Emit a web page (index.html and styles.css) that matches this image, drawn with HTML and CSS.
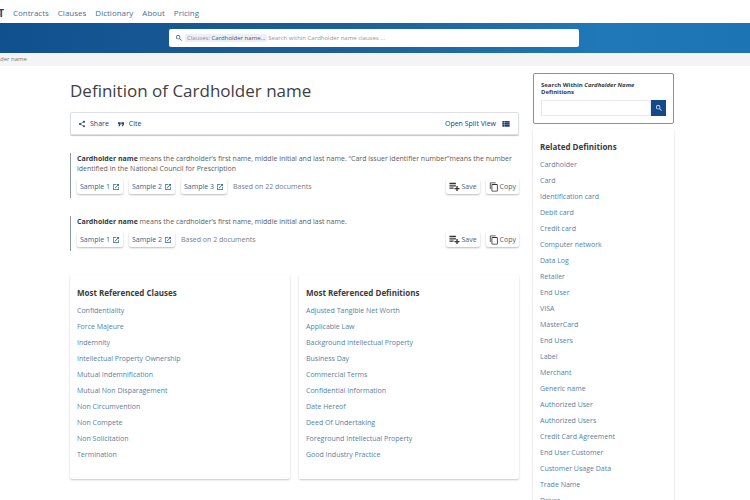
FILE: index.html
```html
<!DOCTYPE html>
<html lang="en">
<head>
    <meta charset="UTF-8">
    <meta name="viewport" content="width=device-width, initial-scale=1.0">
    <title>Definition of Cardholder name</title>
    <link rel="stylesheet" href="styles.css">
</head>
<body>
    <!-- Shared icons -->
    <svg class="sprite" aria-hidden="true">
        <symbol id="icon-search" viewBox="0 0 24 24"><path d="M15.5 14h-.79l-.28-.27A6.47 6.47 0 0 0 16 9.5 6.5 6.5 0 1 0 9.5 16c1.61 0 3.09-.59 4.23-1.57l.27.28v.79l5 4.99L20.49 19l-4.99-5zm-6 0a4.5 4.5 0 1 1 0-9 4.5 4.5 0 0 1 0 9z"/></symbol>
        <symbol id="icon-open" viewBox="0 0 24 24"><path d="M19 19H5V5h7V3H5a2 2 0 0 0-2 2v14a2 2 0 0 0 2 2h14a2 2 0 0 0 2-2v-7h-2v7zM14 3v2h3.59l-9.83 9.83 1.41 1.41L19 6.41V10h2V3h-7z"/></symbol>
        <symbol id="icon-save" viewBox="0 0 24 24"><path d="M1 4h14v3H1zM1 9h14v3H1zM1 14h9v3H1zM16 11h3v4h4v3h-4v4h-3v-4h-4v-3h4z"/></symbol>
        <symbol id="icon-copy" viewBox="0 0 24 24"><path d="M16 1H4a2 2 0 0 0-2 2v14h2V3h12V1zm3 4H8a2 2 0 0 0-2 2v14c0 1.1.9 2 2 2h11a2 2 0 0 0 2-2V7a2 2 0 0 0-2-2zm0 16H8V7h11v14z"/></symbol>
        <symbol id="icon-share" viewBox="0 0 24 24"><path d="M18 16.08c-.76 0-1.44.3-1.96.77L8.91 12.7c.05-.23.09-.46.09-.7s-.04-.47-.09-.7l7.05-4.11A3 3 0 1 0 15 5c0 .24.04.47.09.7L8.04 9.81a3 3 0 1 0 0 4.38l7.12 4.16c-.05.21-.08.43-.08.65A2.92 2.92 0 1 0 18 16.08z"/></symbol>
        <symbol id="icon-quote" viewBox="0 0 24 24"><path d="M3 7h8v6l-3 6H4l3-6H3zM13 7h8v6l-3 6h-4l3-6h-4z"/></symbol>
        <symbol id="icon-list" viewBox="0 0 24 24"><path d="M1 3h5v5H1zM1 9h5v5H1zM1 15h5v5H1zM7 3h16v5H7zM7 9h16v5H7zM7 15h16v5H7z"/></symbol>
    </svg>

    <nav class="navbar">
        <div class="logo"><span>T</span></div>
        <a href="#">Contracts</a>
        <a href="#">Clauses</a>
        <a href="#">Dictionary</a>
        <a href="#">About</a>
        <a href="#">Pricing</a>
    </nav>

    <!-- Main search -->
    <header class="search-banner">
        <form class="search-bar">
            <svg class="icon"><use href="#icon-search"/></svg>
            <span class="tag">Clauses: <b>Cardholder name...</b></span>
            <input type="text" aria-label="Search clauses" placeholder="Search within Cardholder name clauses ...">
        </form>
    </header>

    <div class="breadcrumb">der name</div>

    <div class="page">
        <main>
            <h1>Definition of Cardholder name</h1>

            <div class="toolbar">
                <button type="button"><svg class="icon"><use href="#icon-share"/></svg>Share</button>
                <button type="button"><svg class="icon"><use href="#icon-quote"/></svg>Cite</button>
                <button type="button" class="split-view">Open Split View<svg class="icon"><use href="#icon-list"/></svg></button>
            </div>

            <!-- Definitions -->
            <section class="definition">
                <p><strong>Cardholder name</strong> means the cardholder’s first name, middle initial and last name. “Card issuer identifier number”means the number identified in the National Council for Prescription</p>
                <div class="actions">
                    <a href="#">Sample 1<svg class="icon"><use href="#icon-open"/></svg></a>
                    <a href="#">Sample 2<svg class="icon"><use href="#icon-open"/></svg></a>
                    <a href="#">Sample 3<svg class="icon"><use href="#icon-open"/></svg></a>
                    <span class="based">Based on 22 documents</span>
                    <button type="button" class="save"><svg class="icon"><use href="#icon-save"/></svg>Save</button>
                    <button type="button"><svg class="icon"><use href="#icon-copy"/></svg>Copy</button>
                </div>
            </section>

            <section class="definition">
                <p><strong>Cardholder name</strong> means the cardholder’s first name, middle initial and last name.</p>
                <div class="actions">
                    <a href="#">Sample 1<svg class="icon"><use href="#icon-open"/></svg></a>
                    <a href="#">Sample 2<svg class="icon"><use href="#icon-open"/></svg></a>
                    <span class="based">Based on 2 documents</span>
                    <button type="button" class="save"><svg class="icon"><use href="#icon-save"/></svg>Save</button>
                    <button type="button"><svg class="icon"><use href="#icon-copy"/></svg>Copy</button>
                </div>
            </section>

            <div class="referenced">
                <section class="card">
                    <h2>Most Referenced Clauses</h2>
                    <ul>
                        <li><a href="#">Confidentiality</a></li>
                        <li><a href="#">Force Majeure</a></li>
                        <li><a href="#">Indemnity</a></li>
                        <li><a href="#">Intellectual Property Ownership</a></li>
                        <li><a href="#">Mutual Indemnification</a></li>
                        <li><a href="#">Mutual Non Disparagement</a></li>
                        <li><a href="#">Non Circumvention</a></li>
                        <li><a href="#">Non Compete</a></li>
                        <li><a href="#">Non Solicitation</a></li>
                        <li><a href="#">Termination</a></li>
                    </ul>
                </section>
                <section class="card">
                    <h2>Most Referenced Definitions</h2>
                    <ul>
                        <li><a href="#">Adjusted Tangible Net Worth</a></li>
                        <li><a href="#">Applicable Law</a></li>
                        <li><a href="#">Background Intellectual Property</a></li>
                        <li><a href="#">Business Day</a></li>
                        <li><a href="#">Commercial Terms</a></li>
                        <li><a href="#">Confidential Information</a></li>
                        <li><a href="#">Date Hereof</a></li>
                        <li><a href="#">Deed Of Undertaking</a></li>
                        <li><a href="#">Foreground Intellectual Property</a></li>
                        <li><a href="#">Good Industry Practice</a></li>
                    </ul>
                </section>
            </div>
        </main>

        <!-- Sidebar -->
        <aside>
            <form class="search-within">
                <label for="within">Search Within <em>Cardholder Name</em> Definitions</label>
                <div class="field">
                    <input type="text" id="within">
                    <button type="button" aria-label="Search"><svg class="icon"><use href="#icon-search"/></svg></button>
                </div>
            </form>
            <section class="card">
                <h2>Related Definitions</h2>
                <ul>
                    <li><a href="#">Cardholder</a></li>
                    <li><a href="#">Card</a></li>
                    <li><a href="#">Identification card</a></li>
                    <li><a href="#">Debit card</a></li>
                    <li><a href="#">Credit card</a></li>
                    <li><a href="#">Computer network</a></li>
                    <li><a href="#">Data Log</a></li>
                    <li><a href="#">Retailer</a></li>
                    <li><a href="#">End User</a></li>
                    <li><a href="#">VISA</a></li>
                    <li><a href="#">MasterCard</a></li>
                    <li><a href="#">End Users</a></li>
                    <li><a href="#">Label</a></li>
                    <li><a href="#">Merchant</a></li>
                    <li><a href="#">Generic name</a></li>
                    <li><a href="#">Authorized User</a></li>
                    <li><a href="#">Authorized Users</a></li>
                    <li><a href="#">Credit Card Agreement</a></li>
                    <li><a href="#">End User Customer</a></li>
                    <li><a href="#">Customer Usage Data</a></li>
                    <li><a href="#">Trade Name</a></li>
                    <li><a href="#">Driver</a></li>
                </ul>
            </section>
        </aside>
    </div>
</body>
</html>
```
FILE: styles.css
```css
* {
    box-sizing: border-box;
}

html {
    scrollbar-width: none;
}

body {
    margin: 0;
    background-color: #fff;
    color: #5a5d60;
    font-family: "Open Sans", "Noto Sans", sans-serif;
    font-size: 7px;
    line-height: 10px;
}

a {
    color: #5680a8;
    text-decoration: none;
}

button,
input {
    font: inherit;
    color: inherit;
    border: none;
    background: none;
    padding: 0;
    margin: 0;
}

button {
    cursor: pointer;
}

.sprite {
    display: none;
}

.icon {
    width: 8px;
    height: 8px;
    fill: currentColor;
    flex: none;
}

/* Top navigation */
.navbar {
    display: flex;
    align-items: center;
    gap: 9px;
    height: 23px;
    padding-top: 3px;
    font-size: 8px;
}

.navbar a {
    color: #4a6f96;
}

.logo {
    display: flex;
    justify-content: flex-end;
    width: 4px;
    overflow: hidden;
    color: #143f70;
    font-size: 10px;
    font-weight: 700;
}

.search-banner {
    padding: 6px 171px 6px 169px;
    background: linear-gradient(100deg, #10508f, #1d5f98 45%, #2078b8 80%, #1d74b4);
}

.search-bar {
    display: flex;
    align-items: center;
    height: 18px;
    padding: 0 6px;
    background-color: #fff;
    border-radius: 2px;
    color: #24558f;
    font-size: 6px;
}

.search-bar input {
    flex: 1;
    outline: none;
}

.search-bar input::placeholder {
    color: #92969a;
    opacity: 1;
}

.tag {
    margin: 0 1px 0 2px;
    padding: 0 2px;
    height: 8px;
    line-height: 8px;
    background-color: #eceff5;
    border-radius: 2px;
    color: #8a8f96;
}

.tag b {
    color: #4e5661;
    font-weight: 400;
}

.breadcrumb {
    background-color: #f4f4f5;
    color: #77797c;
    font-size: 6px;
    line-height: 13px;
}

/* Page columns */
.page {
    display: grid;
    grid-template-columns: 1fr 141px;
    gap: 14px;
    padding: 0 76px 0 70px;
}

h1 {
    margin: 11px 0 8px;
    color: #3e4042;
    font-size: 17px;
    font-weight: 400;
    line-height: 27px;
}

.toolbar {
    display: flex;
    align-items: center;
    gap: 8px;
    height: 23px;
    padding: 0 8px 0 7px;
    border: 1px solid #dde0e3;
    border-radius: 2px;
    box-shadow: 0 1px 1px #bfc3c8;
    color: #24406e;
}

.toolbar button {
    display: flex;
    align-items: center;
    gap: 4px;
    font-weight: 500;
}

.toolbar .split-view {
    gap: 6px;
    margin-left: auto;
}

.definition {
    margin-top: 18px;
    padding: 1px 0 4px 6px;
    border-left: 1px solid #8f9699;
}

.definition p {
    margin: 0 0 5px;
}

.definition strong {
    color: #37393b;
}

.actions {
    display: flex;
    align-items: center;
    gap: 6px;
}

.actions a,
.actions button {
    display: flex;
    align-items: center;
    gap: 2px;
    height: 15px;
    padding: 0 3px;
    border-radius: 2px;
    box-shadow: 0 1px 2px #bbb;
}

.actions a {
    color: #2d6596;
    font-weight: 500;
}

.actions .based {
    color: #7a7c7e;
}

.actions button {
    gap: 1px;
}

.actions .save {
    margin-left: auto;
}

.actions button .icon {
    width: 10px;
    height: 10px;
    color: #333;
}

.actions .save .icon {
    width: 11px;
    height: 11px;
}

/* Link lists */
.referenced {
    display: grid;
    grid-template-columns: 1fr 1fr;
    gap: 9px;
    margin-top: 24px;
}

.card {
    padding: 11px 7px 16px;
    border-radius: 2px;
    box-shadow: 0 1px 2px #c4c6c8;
}

.card h2 {
    margin: 0 0 3px;
    color: #3a3c3e;
    font-size: 8px;
    line-height: 14px;
}

.card ul {
    margin: 0;
    padding: 0;
    list-style: none;
}

.card li {
    line-height: 16px;
}

/* Sidebar */
aside {
    padding-top: 7px;
}

.search-within {
    padding: 8px 7px 7px;
    border: 1px solid #7d93a7;
    border-radius: 2px;
    color: #37393b;
    font-size: 6px;
    font-weight: 700;
    line-height: 7px;
}

.field {
    display: flex;
    margin-top: 4px;
}

.field input {
    flex: 1;
    min-width: 0;
    border: 1px solid #e6e8ea;
}

.field button {
    display: flex;
    align-items: center;
    justify-content: center;
    width: 15px;
    height: 16px;
    background-color: #15498a;
    color: #fff;
}

aside .card {
    margin-top: 5px;
}
```
